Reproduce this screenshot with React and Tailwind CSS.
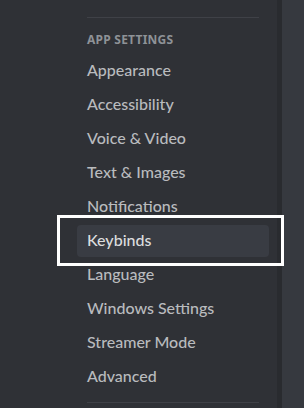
const items = [
  'Appearance',
  'Accessibility',
  'Voice & Video',
  'Text & Images',
  'Notifications',
  'Keybinds',
  'Language',
  'Windows Settings',
  'Streamer Mode',
  'Advanced',
];

const App = () => {
  return (
    <div
      className="relative flex h-[408px] w-[304px] overflow-hidden bg-[#36393f]"
      style={{ fontFamily: '"Noto Sans", "Open Sans", sans-serif' }}
    >
      <div className="h-full w-[277px] shrink-0 bg-[#2f3136] pl-[77px]">
        <div className="w-[192px]">
          <div className="mx-[10px] mt-[17px] h-px bg-[#3f4147]" />
          <div className="mt-[14px] px-[10px] text-[12px] font-bold uppercase leading-4 tracking-[0.02em] text-[#8e9297]">
            App Settings
          </div>
          <div className="mt-[7px] flex flex-col gap-[2px] font-['Lato',sans-serif]">
            {items.map((item) => (
              <div
                key={item}
                className={
                  item === 'Keybinds'
                    ? 'flex h-8 items-center rounded-[4px] bg-[#393c43] px-[10px] pb-[3px] text-[16px] font-medium leading-5 text-[#dcddde]'
                    : 'flex h-8 items-center rounded-[4px] px-[10px] pb-[3px] text-[16px] font-medium leading-5 text-[#b9bbbe]'
                }
              >
                {item}
              </div>
            ))}
          </div>
          <div className="mx-[10px] mt-[9px] h-px bg-[#3f4147]" />
        </div>
      </div>
      <div className="h-full w-[5px] shrink-0 bg-[#292b2f]" />
      <div className="flex-1" />

      <div className="absolute left-[57px] top-[215px] h-[51px] w-[227px] border-[3px] border-white" />
    </div>
  );
};

export default App;
